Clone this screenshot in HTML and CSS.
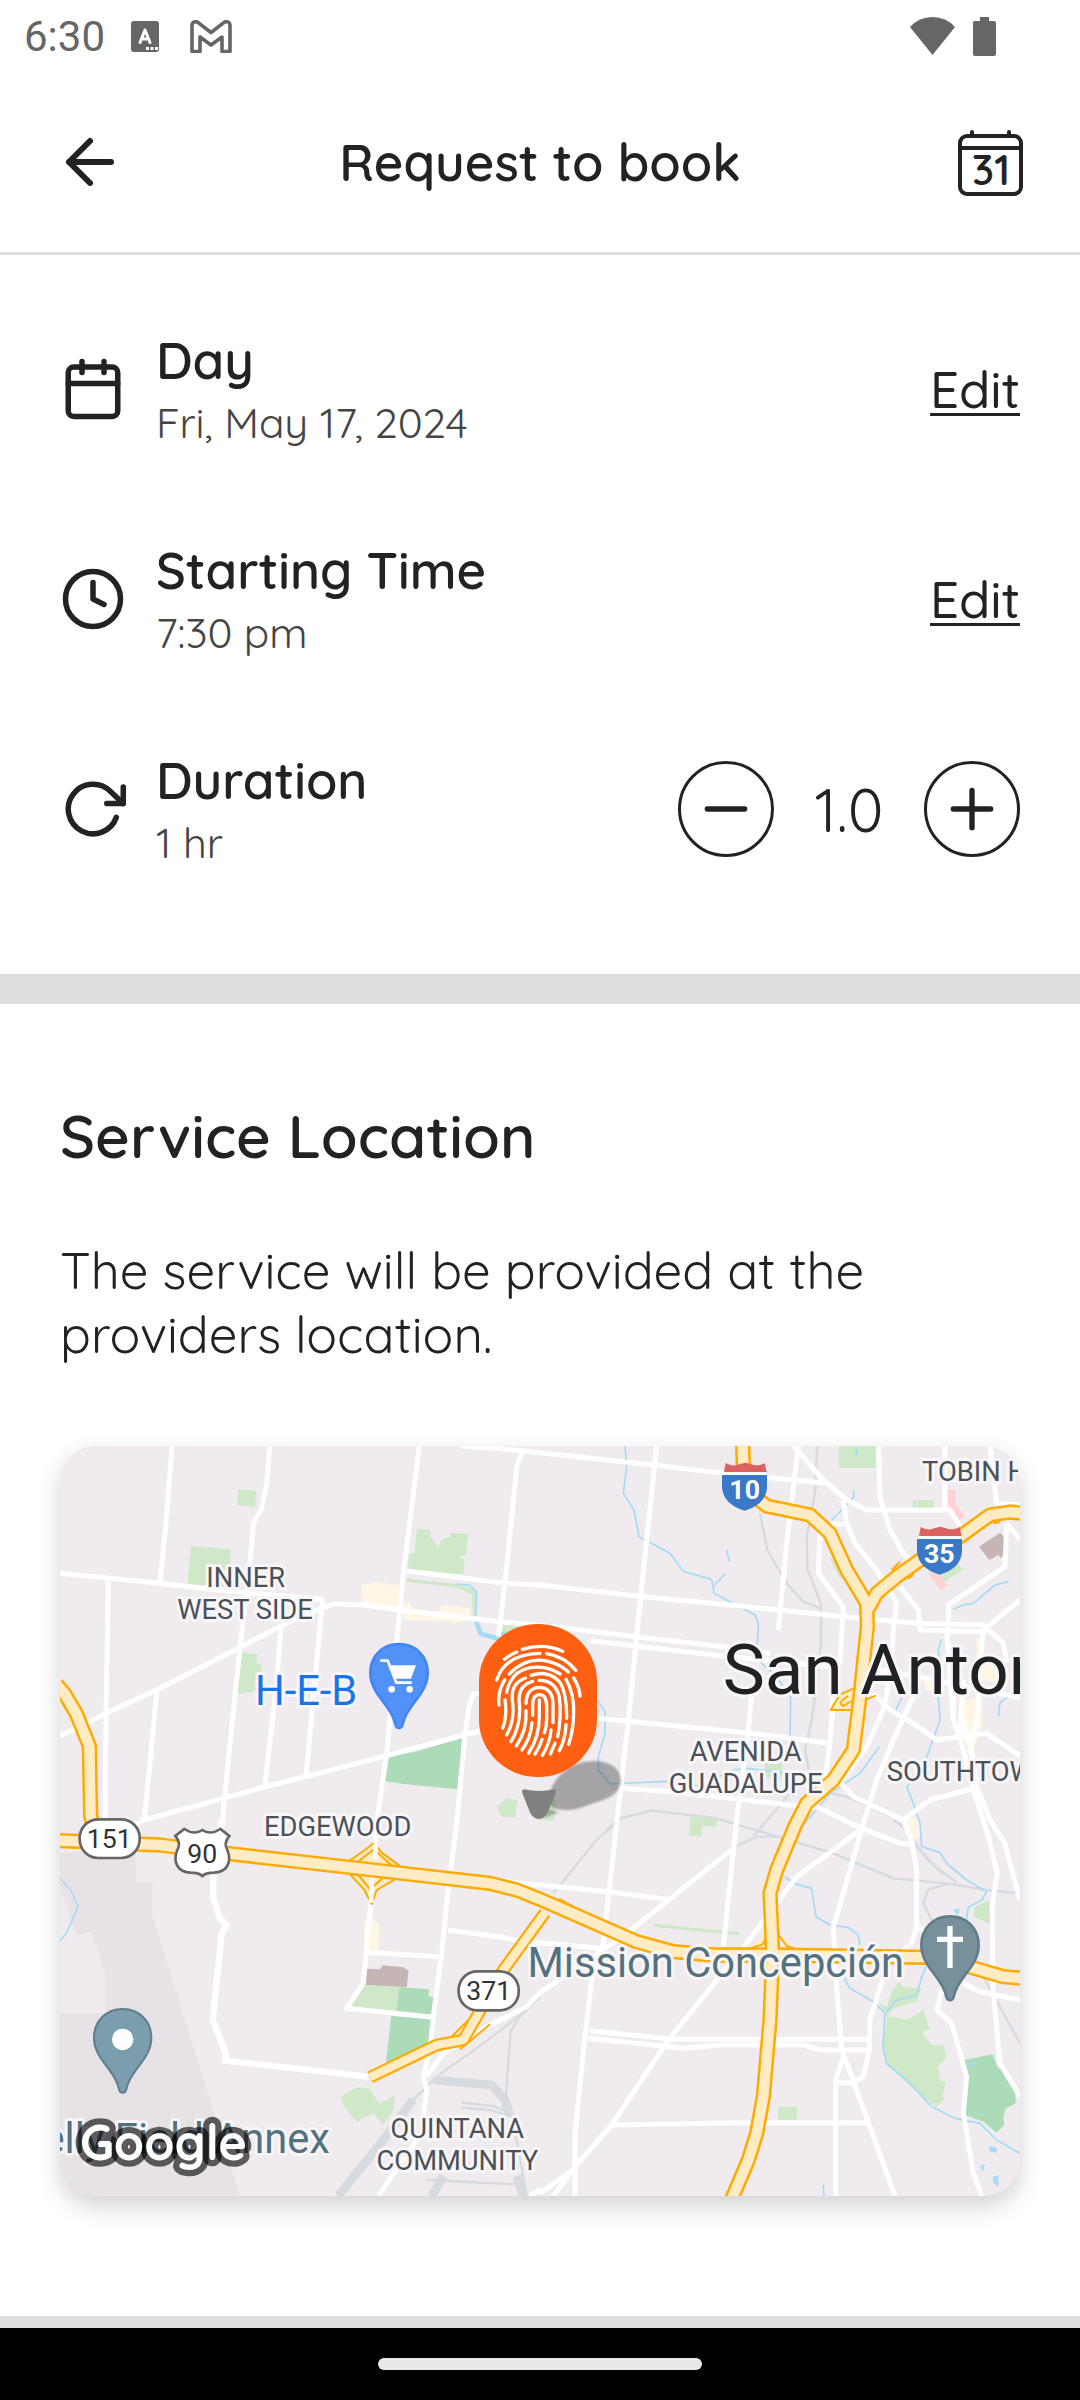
FILE: index.html
```html
<!DOCTYPE html>
<html lang="en">
<head>
	<meta charset="utf-8">
	<meta name="viewport" content="width=device-width,initial-scale=1">
	<title>Request to book</title>
	<link rel="stylesheet" href="styles.css">
</head>
<body>
	<div class="statusbar">
		<span class="time">6:30</span>
		<svg class="ico_a" viewBox="0 0 28 31" aria-hidden="true">
			<rect width="28" height="31" rx="3" fill="#666"/>
			<path d="M9 21.500L14 9l5 12.500M10.500 18h7" fill="none" stroke="#fff" stroke-width="3" stroke-linecap="round" stroke-linejoin="round"/>
			<path d="M15 26h3v3h-3zM19.500 26h3v3h-3zM24 26h3v3h-3z" fill="#fff"/>
		</svg>
		<svg class="ico_m" viewBox="0 0 42 33" aria-hidden="true">
			<path d="M2 31.500V5.500C2 1.500 6 .8 8.500 2.800L21 12.500 33.500 2.800C36 .8 40 1.500 40 5.500V31.500H32V17L21 25 10 17V31.500H2z" fill="none" stroke="#666" stroke-width="3.600" stroke-linejoin="round"/>
		</svg>
		<span class="space"></span>
		<svg class="ico_wifi" viewBox="0 0 45 38" aria-hidden="true"><path d="M0 10Q9 0 22.500 0T45 10L22.500 38z" fill="#666"/></svg>
		<svg class="ico_batt" viewBox="0 0 23 39" aria-hidden="true"><path d="M7 0h9v4h5a2 2 0 0 1 2 2v31a2 2 0 0 1-2 2H2a2 2 0 0 1-2-2V6a2 2 0 0 1 2-2h5z" fill="#666"/></svg>
	</div>

	<header class="header">
		<button type="button" class="iconbtn" aria-label="Back">
			<svg class="line" viewBox="0 0 24 24"><path d="M19 12H5M12 19l-7-7 7-7"/></svg>
		</button>
		<h1>Request to book</h1>
		<button type="button" class="iconbtn" aria-label="Calendar">
			<svg viewBox="0 0 72 72">
				<g fill="none" stroke="#222" stroke-width="4" stroke-linecap="round">
					<rect x="6" y="10" width="61" height="58" rx="7"/>
					<path d="M6 22H67M18 6v4M55 6v4"/>
				</g>
				<text class="cal_num" x="37" y="59" text-anchor="middle">31</text>
			</svg>
		</button>
	</header>

	<main>
		<section class="booking">
			<div class="row">
				<svg class="icon line" viewBox="0 0 24 24" aria-hidden="true"><rect x="3" y="4" width="18" height="18" rx="2"/><path d="M16 2v4M8 2v4M3 10h18"/></svg>
				<div class="info">
					<h2>Day</h2>
					<p>Fri, May 17, 2024</p>
				</div>
				<a href="#day" class="edit" aria-label="Edit day">Edit</a>
			</div>
			<div class="row">
				<svg class="icon line" viewBox="0 0 24 24" aria-hidden="true"><circle cx="12" cy="12" r="10"/><path d="M12 6v6l4 2"/></svg>
				<div class="info">
					<h2>Starting Time</h2>
					<p>7:30 pm</p>
				</div>
				<a href="#time" class="edit" aria-label="Edit starting time">Edit</a>
			</div>
			<div class="row">
				<svg class="icon line" viewBox="0 0 24 24" aria-hidden="true"><path d="M23 4v6h-6"/><path d="M20.490 15a9 9 0 1 1-2.120-9.360L23 10"/></svg>
				<div class="info">
					<h2>Duration</h2>
					<p>1 hr</p>
				</div>
				<div class="stepper">
					<button type="button" aria-label="Less"><svg class="line" viewBox="0 0 24 24"><path d="M5 12h14"/></svg></button>
					<output>1.0</output>
					<button type="button" aria-label="More"><svg class="line" viewBox="0 0 24 24"><path d="M12 5v14M5 12h14"/></svg></button>
				</div>
			</div>
		</section>

		<section class="location">
			<h2>Service Location</h2>
			<p>The service will be provided at the providers location.</p>
			<div class="map">
				<svg viewBox="0 0 2880 2250" preserveAspectRatio="xMidYMid slice" role="img" aria-label="Map of San Antonio">
					<defs>
						<path id="pin" d="M0-86C49-86 86-50 86 0C86 33 70 58 48 86C28 113 16 130 10 158C7 168-7 168-10 158C-16 130-28 113-48 86C-70 58-86 33-86 0C-86-50-49-86 0-86z"/>
						<g id="interstate">
							<path d="M5 28H130L134 38H1z" fill="#fff"/>
							<path d="M0 37H135V76C132 110 110 131 68 144C26 131 4 110 0 76z" fill="#3a78c8"/>
							<path d="M11 1C25 10 41 10 52 5L70 0L87 5C98 10 115 9 128 1L134 28H6z" fill="#dc6161"/>
						</g>
						<filter id="soft"><feGaussianBlur stdDeviation="3"/></filter>
					</defs>

					<!-- land -->
					<path class="airport" d="M0 1222L225 1202 228 1307 278 1312 275 1402 540 2250H0V1702H135V1577L95 1457 50 1467 0 1322z"/>
					<g class="park">
						<path d="M535 130L589 135 584 182 533 177zM394 300L513 310 505 422 382 414z"/>
						<path d="M1070 248L1110 252 1112 272 1135 306 1145 282 1170 274 1172 260 1224 264 1218 327 1196 330 1214 342 1210 385 1043 369 1048 325 1065 320z"/>
						<path d="M1040 398L1190 414 1236 428 1250 450 1245 510 1238 510 1236 446 1190 424 1040 407z"/>
						<path d="M547 620L591 624 590 654 606 658 600 732 532 744zM1330 537L1410 540 1320 580z"/>
						<path d="M1340 1057L1372 1062 1366 1114 1326 1112 1312 1092 1315 1077zM1430 1060L1488 1062 1482 1124 1436 1120z"/>
						<path d="M2337 0h111v66h-111zM2558 162h64v24h-64zM2640 392L2690 352 2710 370 2655 407zM2310 337L2330 345 2350 392 2340 397z"/>
						<path d="M2112 945L2170 937 2165 997 2120 997zM1890 1112L1971 1118 1970 1142 1925 1140 1925 1172 1887 1170z"/>
						<path d="M912 1616L1018 1624 1011 1695 875 1682zM844 1950L890 1924 925 1927 960 1974 1004 1947 1000 1992 970 2037 940 2002 890 2028 846 1972z"/>
						<path d="M1782 1432L1840 1440 2037 1458V1468L1840 1449 1782 1442zM2154 1983h57v39h-57zM2742 1384L2788 1362 2790 1434 2742 1412z"/>
						<path d="M2482 1712L2545 1720 2590 1692 2608 1750 2585 1758 2615 1797 2650 1798 2658 1834 2632 1864 2640 1902 2658 1910 2647 1952 2655 1957 2628 1982 2570 1937 2475 1852 2468 1802z"/>
						<path d="M2455 1667L2480 1682 2498 1632 2518 1608 2530 1622 2584 1627 2570 1667 2500 1687 2480 1712z"/>
					</g>
					<g class="park dark">
						<path d="M982 934L1065 917 1210 876 1192 1030 1030 1014 972 1004z"/>
						<path d="M1018 1624L1106 1630V1652L1122 1654 1116 1707 1010 1697zM994 1710L1116 1719 1110 1792 978 1852z"/>
						<path d="M2712 1842L2798 1825 2812 1864 2835 1877 2865 1932 2867 1972 2835 1990 2830 2014 2833 2037 2810 2060 2770 2027 2715 2007z"/>
					</g>
					<g class="shops">
						<path d="M906 418L950 408 1025 418 1022 486 960 494 904 470zM1025 472L1050 467 1055 487 1130 497 1150 477 1230 487 1228 512 1185 534 1165 524 1090 524 1030 522z"/>
						<path d="M910 1432L925 1407 958 1437 955 1507 940 1532 915 1522zM2545 1112L2580 1122 2583 1162 2565 1187 2540 1142z"/>
						<path d="M2710 762L2765 752 2768 837 2740 912 2725 932 2712 880zM2750 572L2775 580 2765 640 2830 655 2825 712 2750 700zM2590 690h36v44h-30z"/>
					</g>
					<path class="pink" d="M2660 130L2685 130 2688 172 2715 212 2698 224 2662 187zM2605 377L2640 387 2663 417 2645 435 2610 392z"/>
					<path class="brown" d="M2757 302L2820 260 2832 272V324L2822 336 2815 327 2788 342zM918 1568L960 1570 968 1558 1030 1564 1046 1574 1040 1624 915 1616z"/>

					<!-- rail -->
					<g class="rail">
						<path d="M2272 0L2265 142 2240 272 2243 372 2283 472 2283 592 2265 752 2255 822 2235 912 2250 990"/>
						<path d="M2100 202L2122 312 2180 412 2230 467 2283 487M1640 1152L1680 1117 1775 1094 1960 1115 2140 1168 2320 1222 2500 1297 2660 1312 2780 1332 2880 1342"/>
						<path d="M1480 1342L1610 1182 1680 1120M2290 1037L2360 1052 2520 1122 2570 1202 2650 1287M2500 1122L2540 1150 2600 1240 2690 1310"/>
						<path d="M2660 1315L2605 1330 2590 1372 2615 1422M2770 1592L2880 1792M2020 1205L2090 1172 2150 1172M2080 1170L2150 1090 2190 1040"/>
						<path d="M1440 1652L1400 1692 1270 1792 1130 1892 1050 1972M1385 1702L1352 1757 1338 1942 1370 2082 1400 2250M1205 1970L1300 1980 1350 2000M1205 1985L1290 1992 1350 2010M1100 2202L1360 2215 1390 2182"/>
						<path class="yard" d="M1060 1960L970 2082 835 2250M1120 1902L1295 1917 1335 1962 1350 2010M1150 2190L1115 2250M1370 2190L1390 2250"/>
					</g>

					<!-- water -->
					<g class="water">
						<path d="M1190 414L1230 418 1250 440 1248 510M1695 0L1700 62 1690 142 1722 192 1737 272 1830 322 1870 376 1955 400 1963 442 2015 470 2085 507 2095 532 2092 592 2105 652 2140 682 2192 752 2190 882"/>
						<path d="M1995 384L1963 417M2000 312L2008 347M1612 762L1635 797V862L1615 932V972L1650 1014 1810 1006 1940 1022 2000 975 2060 967 2190 982 2200 1052"/>
						<path d="M2380 132L2382 152 2355 182 2315 222M2389 10V30M2845 407L2805 417 2740 472 2710 477 2680 490M2458 902L2400 982 2310 1042 2228 1140M2525 755L2505 800"/>
						<path d="M2645 580L2635 612 2640 672 2635 752 2640 822 2615 892 2590 962 2540 1022 2560 1072 2580 1132 2585 1202 2640 1220 2665 1257 2720 1302 2780 1337 2765 1362 2725 1384 2720 1420M2845 752L2820 770 2815 812"/>
						<path d="M2175 1292L2200 1312 2255 1327 2268 1412 2310 1437 2365 1444 2395 1467 2400 1497M2355 1562V1602L2370 1627 2440 1667 2475 1702 2468 1802 2480 1852 2550 1912 2615 1982 2685 2017 2760 2032 2810 2082 2880 2122"/>
						<path d="M2598 1562L2585 1592 2570 1647 2510 1662 2480 1697M0 1297L32 1332 54 1382 20 1460 0 1484M2290 2217L2292 2250"/>
						<path class="wide" d="M1248 527L1262 563 1310 577 1340 560"/>
					</g>
					<path class="pond" d="M2788 2100L2810 2105V2120L2790 2117zM2760 2160L2775 2155 2768 2178zM2798 2192L2815 2187V2222L2800 2210zM2678 1392L2698 1387 2696 1407zM2725 1848L2752 1855 2735 1862zM2765 2000h15l-5 6z"/>

					<!-- streets -->
					<g class="street">
						<path d="M336 0L318 232 300 407M629 0L620 112 605 187 580 232 570 352 540 602 500 992 485 1152M0 382L300 412 470 432 785 460 790 480M145 407L138 802 135 1150"/>
						<path d="M0 870L135 804 300 727 520 614 670 537 770 492 820 474 910 476 1020 492 1320 527 1520 547 1730 572 1990 602 2130 622M1590 584L1990 630 2340 665"/>
						<path d="M663 542L650 712 615 1017M785 482L770 652 738 987M290 737L270 952 253 1117"/>
						<path d="M1078 0L1030 382 1010 592 988 832 980 927 952 1112 945 1190 930 1402 910 1612 860 1687 1120 1714"/>
						<path d="M1385 22L1370 62 1335 412 1315 572M1200 0L1310 7 1440 20 1780 57 1990 82 2300 112M1040 375L1335 412 1440 417 1750 452 1960 472 2400 517 2570 532 2770 537 2830 592 2840 650"/>
						<path d="M240 1132L180 1142M240 1125L490 1057 610 1024 970 932 1210 867 1440 815M1440 805L1610 817 1690 824 2070 862 2310 892"/>
						<path d="M1280 742L1240 744 1227 782 1215 867 1188 1152 1165 1322 1145 1522 1120 1712 1110 1812 1090 1892 1100 1932 1090 2012M1070 2082L955 2250"/>
						<path d="M925 1519L1135 1532M1165 1452L1320 1472 1410 1492 1440 1490 1620 1507M1330 1307L1440 1317 1645 1337 1820 1360"/>
						<path d="M1790 0L1740 472 1705 822 1670 1132 1630 1492 1595 1602 1575 1772 1545 2062V2250M2215 0L2180 292 2155 552M2075 742L2065 852 2030 1122 1990 1502"/>
						<path d="M2200 0L2290 102 2360 162 2420 192 2670 192 2700 240M2350 162L2360 232 2385 292 2450 372 2510 472 2500 552 2495 652M2280 262L2275 382 2350 482 2340 652M2310 235L2350 235"/>
						<path d="M2455 0L2460 152 2490 252 2530 322 2560 350M2520 422L2575 492 2580 552 2780 557M2655 0V192M2790 0L2810 172 2880 177M2840 232L2835 362 2665 477V552"/>
						<path d="M2840 232L2880 280M2880 462L2770 552 2760 660 2750 832 2730 900M2500 652L2470 792 2420 902 2340 1010M2320 752L2310 892 2295 1000"/>
						<path d="M2440 742L2490 792 2560 832 2630 882 2780 862 2880 930M2400 660L2560 690 2880 755M2660 552L2680 822M2710 700L2700 870"/>
						<path d="M2560 752L2500 882 2450 1002 2405 1150 2210 1292 2060 1492 1825 1782 1655 2037 1545 2162 1480 2250M1440 2242L1545 2167M1410 2250L1440 2230"/>
						<path d="M2680 752V822L2710 912 2740 1032 2785 1170 2812 1282 2797 1372 2798 1622 2820 1852 2880 1952M2700 800L2735 912 2750 1022 2790 1122 2835 1192 2850 1252 2880 1362"/>
						<path d="M2330 997L2380 1052 2530 1122 2610 1062 2740 1027M1680 1027L1840 1037 2190 1077 2270 1082 2400 1145 2520 1192 2555 1195M2530 1122L2555 1182 2570 1272V1442L2555 1492 2530 1512M2570 1442L2610 1460"/>
						<path d="M2405 1150L2350 1342 2320 1442 2330 1622 2345 1812 2375 1892 2505 2250M2020 1207L1700 1462 1440 1640 1400 1682 1280 1742 1150 1822 1100 1890"/>
						<path d="M1590 1754L1840 1780H2430M1585 1777L1870 1807 1980 1797H2230L2285 1812H2425M2470 1592L2430 1722 2428 1812 2410 1892 2380 1910H2330M2350 1832L2327 1902V2250M1655 2037L2030 2030H2425"/>
						<path d="M2650 1622L2630 1692 2675 1732 2720 1892 2710 2002 2740 2182 2765 2250M2710 1612L2760 1637 2880 1662"/>
						<path class="big" d="M485 1120L460 1292V1357L480 1417 500 1437 485 1462 458 1722 498 1822 495 1844 925 1892"/>
					</g>

					<!-- ramps -->
					<g class="ramp">
						<path d="M860 1250L915 1212 942 1190 965 1220 1025 1264M870 1285L912 1330 935 1374 950 1332 1010 1297z"/>
						<path d="M885 1254L942 1210 1000 1264M895 1287L930 1330 975 1290"/>
						<path d="M2060 1510L2108 1495 2125 1462M2152 1462L2180 1500 2220 1513M2060 1545L2115 1560 2128 1600M2150 1600L2170 1560 2220 1545"/>
						<path d="M2380 728L2340 745 2312 792H2372M2365 750Q2330 770 2350 780L2380 762M2420 760L2448 748M1470 1372L1500 1360 1540 1382"/>
						<path d="M2495 372L2520 348M2545 398L2560 386M2800 232L2820 228M1170 1777L1230 1717M1200 1810L1290 1735"/>
					</g>

					<!-- highways -->
					<g class="hw_edge">
						<path class="thin" d="M1455 1400L1330 1572 1250 1712 1210 1782 1130 1797 930 1894"/>
						<path d="M-10 715L15 745 50 805 88 900 92 1110 105 1160"/>
						<path d="M0 1184L300 1197 500 1222 940 1272 1290 1312 1370 1332 1440 1360 1730 1487 1840 1517 1960 1527H2140L2600 1534 2720 1560 2830 1592 2890 1597"/>
						<path d="M2890 202L2850 198 2790 207 2700 272 2580 342 2510 392 2450 442 2424 490"/>
						<path d="M2048-10L2050 62 2060 132 2120 180 2250 207 2310 262 2360 372 2420 472 2422 542 2400 752 2380 912 2320 1002 2240 1072 2205 1140 2150 1272 2130 1342 2138 1522 2130 1722 2110 1952 2090 2062 2065 2142 2015 2260"/>
					</g>
					<g class="hw_fill">
						<path class="thin" d="M1455 1400L1330 1572 1250 1712 1210 1782 1130 1797 930 1894"/>
						<path d="M-10 715L15 745 50 805 88 900 92 1110 105 1160"/>
						<path d="M0 1184L300 1197 500 1222 940 1272 1290 1312 1370 1332 1440 1360 1730 1487 1840 1517 1960 1527H2140L2600 1534 2720 1560 2830 1592 2890 1597"/>
						<path d="M2890 202L2850 198 2790 207 2700 272 2580 342 2510 392 2450 442 2424 490"/>
						<path d="M2048-10L2050 62 2060 132 2120 180 2250 207 2310 262 2360 372 2420 472 2422 542 2400 752 2380 912 2320 1002 2240 1072 2205 1140 2150 1272 2130 1342 2138 1522 2130 1722 2110 1952 2090 2062 2065 2142 2015 2260"/>
					</g>
					<path class="over" d="M950 1140L945 1240M936 1295L933 1370"/>

					<!-- place names -->
					<g class="area">
						<text x="557" y="423">INNER</text>
						<text x="555" y="519">WEST SIDE</text>
						<text x="833" y="1170">EDGEWOOD</text>
						<text x="2057" y="945">AVENIDA</text>
						<text x="2057" y="1041">GUADALUPE</text>
						<text x="1192" y="2076">QUINTANA</text>
						<text x="1192" y="2172">COMMUNITY</text>
						<text class="from" x="2480" y="1005">SOUTHTOWN</text>
						<text class="from" x="2586" y="105">TOBIN HILL</text>
					</g>
					<text class="city" x="1988" y="743">San Antonio</text>
					<text class="place shop" x="892" y="776">H-E-B</text>
					<text class="place" x="2532" y="1592">Mission Concepción</text>
					<text class="place" x="810" y="2120">Kelly Field Annex</text>

					<!-- road shields -->
					<use href="#interstate" x="1986" y="50"/>
					<use href="#interstate" x="2571" y="242"/>
					<g class="num inter">
						<text x="2054" y="160">10</text>
						<text x="2638" y="352">35</text>
					</g>
					<g class="shield">
						<rect x="59" y="1120" width="180" height="116" rx="56"/>
						<rect x="1196" y="1576" width="180" height="117" rx="56"/>
						<path d="M427 1152C442 1163 463 1161 481 1149L508 1170C494 1186 494 1200 503 1214C516 1250 500 1279 462 1280C446 1280 435 1282 427 1290C419 1282 408 1280 392 1280C354 1279 338 1250 351 1214C360 1200 360 1186 346 1170L373 1149C391 1161 412 1163 427 1152z"/>
					</g>
					<g class="num">
						<text x="148" y="1205">151</text>
						<text x="1286" y="1662">371</text>
						<text x="427" y="1250">90</text>
					</g>

					<!-- place pins -->
					<g transform="translate(1017 680)">
						<use href="#pin" fill="#5291f5" stroke="#4285f4" stroke-width="8"/>
						<path d="M-56-36H-34L-8 30H38" fill="none" stroke="#fff" stroke-width="8"/>
						<path d="M-28-22H51L36 18H-14z" fill="#fff"/>
						<circle cx="-22" cy="50" r="10" fill="#fff"/><circle cx="32" cy="50" r="10" fill="#fff"/>
					</g>
					<g transform="translate(188 1775)">
						<use href="#pin" fill="#7b9eaf" stroke="#607d8b" stroke-width="6"/>
						<circle cy="5" r="32" fill="#fff"/>
					</g>
					<g transform="translate(2670 1497)">
						<use href="#pin" fill="#78909c" stroke="#607d8b" stroke-width="8"/>
						<path d="M0-57V69M-39-17H39" fill="none" stroke="#fff" stroke-width="16"/>
					</g>

					<!-- provider marker -->
					<g transform="translate(1200 462)">
						<path d="M272 570C295 510 350 483 405 483C460 485 486 515 483 548C476 585 440 597 405 608C370 620 350 630 320 630C295 631 270 625 268 610z" fill="#000" opacity=".3" filter="url(#soft)"/>
						<path d="M235 657L298 638 262 625z" fill="#000" opacity=".25" filter="url(#soft)"/>
						<path d="M192 568Q237 578 282 568Q290 570 287 580L262 640Q250 657 235 657Q222 657 211 640L187 580Q184 570 192 568z" fill="#808080"/>
						<rect x="57" y="72" width="354" height="459" rx="177" ry="172" fill="#ff5f10"/>
						<g class="finger">
							<path d="M134 178Q150 164 170 156M187 148Q250 128 308 154M110 240Q135 162 240 160M260 161Q315 170 347 211"/>
							<path d="M148 222Q200 168 265 184Q305 195 325 216M140 277Q152 215 210 203Q260 195 300 222M134 240Q112 275 117 315M341 234Q357 258 360 288"/>
							<path d="M196 234Q152 250 157 300Q166 360 140 405M135 300Q142 350 128 384M218 244Q172 256 178 310Q184 375 153 425"/>
							<path d="M214 226Q260 210 293 240Q320 265 320 355M237 241Q285 240 298 290Q305 350 293 410M198 310Q200 262 240 262Q278 265 279 310V368"/>
							<path d="M218 346V315Q218 284 240 284Q260 286 260 320V350Q260 380 253 398M238 300V350Q238 410 206 459M198 332Q202 390 169 438M216 368Q212 415 186 450"/>
							<path d="M318 238Q343 280 341 340Q340 390 326 433M318 374Q316 420 298 452M273 390Q270 430 247 466M246 418Q240 440 225 462M285 430L271 462"/>
						</g>
					</g>

					<text class="google" x="60" y="2142">Google</text>
				</svg>
			</div>
		</section>
	</main>

	<div class="navbar"><i></i></div>
</body>
</html>
```

FILE: styles.css
```css
*{margin:0;padding:0;box-sizing:border-box;}
body{display:flex;flex-direction:column;min-height:100vh;background:#fff;color:#222;font-family:Quicksand,Lato,sans-serif;}
svg{display:block;}
button{border:0;background:none;color:inherit;font:inherit;cursor:pointer;}
.line{fill:none;stroke:#222;stroke-width:2;stroke-linecap:round;stroke-linejoin:round;}

.statusbar{display:flex;align-items:center;height:72px;padding:0 84px 0 24px;color:#666;font-family:Roboto,sans-serif;font-size:42px;}
.statusbar .space{flex:1;}
.statusbar .ico_a{width:28px;height:31px;margin-left:26px;}
.statusbar .ico_m{width:42px;height:33px;margin-left:31px;}
.statusbar .ico_wifi{width:45px;height:38px;margin-right:18px;}
.statusbar .ico_batt{width:23px;height:39px;}

.header{display:flex;align-items:center;justify-content:space-between;height:183px;padding:0 54px;border-bottom:3px solid #ddd;}
.header h1{font-size:51px;font-weight:600;line-height:64px;}
.iconbtn,
.iconbtn svg{width:72px;height:72px;}
.cal_num{fill:#222;font-size:42px;font-weight:600;}

.booking{padding:29px 60px 60px;border-bottom:30px solid #ddd;}
.row{display:flex;align-items:center;gap:30px;height:210px;}
.row .icon{flex:none;width:66px;height:66px;}
.info{flex:1;}
.info h2{font-size:51px;font-weight:600;line-height:68px;}
.info p{color:#444;font-size:42px;font-weight:400;line-height:58px;}
.edit{color:#222;font-size:51px;font-weight:500;line-height:64px;text-decoration:underline;text-decoration-thickness:3px;text-underline-offset:5px;}
.stepper{display:flex;align-items:center;}
.stepper button{display:flex;align-items:center;justify-content:center;width:96px;height:96px;border:3px solid #222;border-radius:50%;}
.stepper button svg{width:64px;height:64px;}
.stepper output{width:150px;text-align:center;font-size:60px;font-weight:400;}

.location{padding:94px 60px 120px;border-bottom:12px solid #ddd;}
.location h2{font-size:60px;font-weight:600;line-height:76px;}
.location p{margin-top:64px;font-size:51px;font-weight:400;line-height:64px;}
.map{margin-top:80px;overflow:hidden;border-radius:36px;background:#efebef;box-shadow:0 10px 24px rgba(0,0,0,0.18);}
.map svg{width:100%;height:auto;font-family:Roboto,sans-serif;}

.airport{fill:#e6e2e6;}
.park{fill:#cee8c8;}
.park.dark{fill:#abdbb7;}
.shops{fill:#fff6e4;}
.pink{fill:#ffd3d6;}
.brown{fill:#c5b5b5;}
.pond{fill:#a5dbf7;}
.rail,.water,.street,.ramp,.hw_edge,.hw_fill,.over,.finger{fill:none;stroke-linejoin:round;}
.rail{stroke:#d5dbde;stroke-width:7;}
.rail .yard{stroke-width:26;}
.water{stroke:#a5dbf7;stroke-width:5;}
.water .wide{stroke-width:14;}
.street{stroke:#fff;stroke-width:15;}
.street .big{stroke-width:19;}
.ramp{fill:#ffecc4;stroke:#ffaa00;stroke-width:6;}
.hw_edge{stroke:#ffaa00;stroke-width:46;}
.hw_edge .thin{stroke-width:38;}
.hw_fill{stroke:#ffecc4;stroke-width:31;}
.hw_fill .thin{stroke-width:25;}
.over{stroke:#fff;stroke-width:14;}

.area text,.place,.city{paint-order:stroke;stroke:#f8f6f8;stroke-width:18px;stroke-linejoin:round;}
.area{fill:#4c5157;font-size:82px;text-anchor:middle;}
.area .from{text-anchor:start;}
.city{fill:#202124;font-size:213px;}
.place{fill:#53717e;font-size:125px;text-anchor:end;}
.place.shop{fill:#1a73e8;}
.num{fill:#333;font-size:80px;text-anchor:middle;}
.num.inter{fill:#fff;font-weight:700;}
.shield{fill:#fff;stroke:#666;stroke-width:8;}
.finger{stroke:#fff;stroke-width:10;stroke-linecap:round;}
.google{paint-order:stroke;fill:#fff;stroke:rgba(0,0,0,0.62);stroke-width:38px;stroke-linejoin:round;font-family:Quicksand,Lato,sans-serif;font-size:146px;font-weight:700;}

.navbar{display:flex;align-items:center;justify-content:center;height:72px;margin-top:auto;background:#000;}
.navbar i{width:30%;height:12px;border-radius:6px;background:#e9e9e9;}
```
